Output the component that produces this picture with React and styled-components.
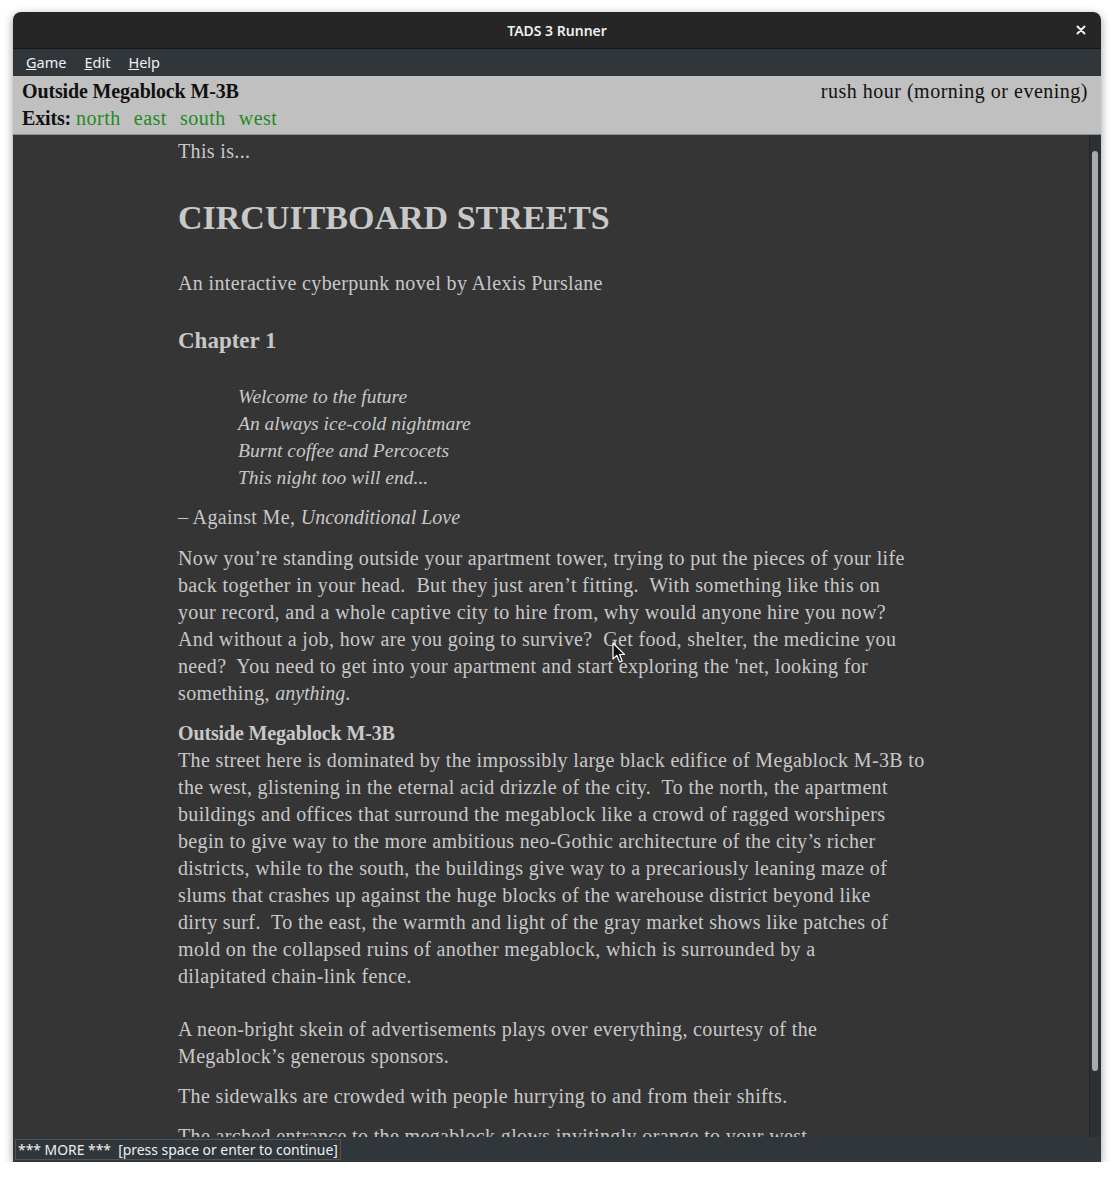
import styled, { createGlobalStyle } from 'styled-components'

const GlobalStyle = createGlobalStyle`
  body {
    margin: 0;
    background: #ffffff;
  }
`

const Window = styled.div`
  position: relative;
  margin: 12px 0 0 13px;
  width: 1088px;
  height: 1150px;
  display: flex;
  flex-direction: column;
  border-radius: 8px 8px 0 0;
  overflow: hidden;
  box-shadow: 0 3px 10px rgba(0, 0, 0, 0.4);
`

const TitleBar = styled.div`
  height: 36px;
  flex-shrink: 0;
  display: grid;
  grid-template-columns: 1fr auto 1fr;
  align-items: center;
  background: #262626;
  border-bottom: 1px solid #161616;
  color: #eeeeee;
  font-family: "Noto Sans", sans-serif;
  font-size: 14px;
  font-weight: 600;
`

const Title = styled.div`
  grid-column: 2;
`

const CloseButton = styled.div`
  justify-self: end;
  margin-right: 15px;
  display: flex;
`

const MenuBar = styled.div`
  height: 27px;
  flex-shrink: 0;
  display: flex;
  align-items: center;
  gap: 18px;
  padding: 0 0 1px 13px;
  box-sizing: border-box;
  background: #31363b;
  color: #eff0f1;
  font-family: "Noto Sans", sans-serif;
  font-size: 14.5px;
`

const MenuItem = styled.span`
  &::first-letter {
    text-decoration: underline;
  }
`

const StatusBar = styled.div`
  height: 56px;
  flex-shrink: 0;
  padding: 2px 13px 0 9px;
  background: #c0c0c0;
  border-bottom: 1px solid #8e8e8e;
  color: #111111;
  font-family: "Liberation Serif", serif;
  font-size: 20px;
  line-height: 27px;
  letter-spacing: 0.5px;
`

const StatusRow = styled.div`
  display: flex;
  justify-content: space-between;
  white-space: pre;
`

const Bold = styled.span`
  font-weight: 700;
  letter-spacing: -0.15px;
`

const Exit = styled.span`
  color: #228b22;
  margin-left: ${p => (p.$first ? 5 : 13)}px;
`

const Main = styled.div`
  flex: 1;
  min-height: 0;
  display: flex;
`

const Content = styled.div`
  flex: 1;
  overflow: hidden;
  padding: 3px 0 0 165px;
  background: #353535;
  color: #c8c8c8;
  font-family: "Liberation Serif", serif;
  font-size: 20px;
  line-height: 27px;
  letter-spacing: 0.35px;
`

const Para = styled.p`
  margin: 0 0 ${p => p.$after || 13}px;
  white-space: pre;
`

const Heading = styled.h1`
  margin: 33px 0 32px;
  font-size: 34px;
  line-height: 40px;
  font-weight: 700;
  letter-spacing: 0;
`

const Chapter = styled.h2`
  margin: 28px 0 26px;
  font-size: 23px;
  line-height: 32px;
  font-weight: 700;
  letter-spacing: 0;
`

const Poem = styled.div`
  margin: 0 0 13px 60px;
  font-style: italic;
  font-size: 19.5px;
  letter-spacing: 0;
  white-space: pre;
`

const Emph = styled.i`
  letter-spacing: 0;
`

const Gap = styled.div`
  height: ${p => p.$h}px;
`

const Scrollbar = styled.div`
  width: 12px;
  flex-shrink: 0;
  background: #2b3034;
  border-left: 1px solid #22262a;
  padding: 16px 0 0 2px;
  box-sizing: border-box;
`

const Thumb = styled.div`
  width: 6px;
  height: 920px;
  border-radius: 3px;
  background: #a9abab;
`

const MoreBar = styled.div`
  height: 25px;
  flex-shrink: 0;
  background: #31363b;
  padding: 2px 0 0 2px;
  box-sizing: border-box;
`

const MoreBox = styled.span`
  display: inline-block;
  padding: 0 2px;
  border: 1px solid #4d545a;
  color: #eff0f1;
  font-family: "Noto Sans", sans-serif;
  font-size: 13.9px;
  line-height: 19px;
  white-space: pre;
`

const Pointer = styled.svg`
  position: absolute;
  left: 599px;
  top: 630px;
`

const App = () => {
  return (
    <>
      <GlobalStyle />
      <Window>
        <TitleBar>
          <Title>TADS 3 Runner</Title>
          <CloseButton>
            <svg width="10" height="10" viewBox="0 0 10 10">
              <path d="M1.5 1.5 L8.5 8.5 M8.5 1.5 L1.5 8.5" stroke="#f2f2f2" strokeWidth="2" strokeLinecap="round" />
            </svg>
          </CloseButton>
        </TitleBar>
        <MenuBar>
          <MenuItem>Game</MenuItem>
          <MenuItem>Edit</MenuItem>
          <MenuItem>Help</MenuItem>
        </MenuBar>
        <StatusBar>
          <StatusRow>
            <Bold>Outside Megablock M-3B</Bold>
            <span>rush hour (morning or evening)</span>
          </StatusRow>
          <StatusRow>
            <span>
              <Bold>Exits:</Bold>
              <Exit $first>north</Exit>
              <Exit>east</Exit>
              <Exit>south</Exit>
              <Exit>west</Exit>
            </span>
          </StatusRow>
        </StatusBar>
        <Main>
          <Content>
            <Para>This is...</Para>
            <Heading>CIRCUITBOARD STREETS</Heading>
            <Para>An interactive cyberpunk novel by Alexis Purslane</Para>
            <Chapter>Chapter 1</Chapter>
            <Poem>
              {'Welcome to the future'}<br />
              {'An always ice-cold nightmare'}<br />
              {'Burnt coffee and Percocets'}<br />
              {'This night too will end...'}
            </Poem>
            <Para $after={14}>– Against Me, <Emph>Unconditional Love</Emph></Para>
            <Para>
              {'Now you’re standing outside your apartment tower, trying to put the pieces of your life'}<br />
              {'back together in your head.  But they just aren’t fitting.  With something like this on'}<br />
              {'your record, and a whole captive city to hire from, why would anyone hire you now?'}<br />
              {'And without a job, how are you going to survive?  Get food, shelter, the medicine you'}<br />
              {'need?  You need to get into your apartment and start exploring the \'net, looking for'}<br />
              {'something, '}<Emph>anything</Emph>.
            </Para>
            <Para>
              <Bold>Outside Megablock M-3B</Bold><br />
              {'The street here is dominated by the impossibly large black edifice of Megablock M-3B to'}<br />
              {'the west, glistening in the eternal acid drizzle of the city.  To the north, the apartment'}<br />
              {'buildings and offices that surround the megablock like a crowd of ragged worshipers'}<br />
              {'begin to give way to the more ambitious neo-Gothic architecture of the city’s richer'}<br />
              {'districts, while to the south, the buildings give way to a precariously leaning maze of'}<br />
              {'slums that crashes up against the huge blocks of the warehouse district beyond like'}<br />
              {'dirty surf.  To the east, the warmth and light of the gray market shows like patches of'}<br />
              {'mold on the collapsed ruins of another megablock, which is surrounded by a'}<br />
              {'dilapitated chain-link fence.'}
            </Para>
            <Gap $h={13} />
            <Para>
              {'A neon-bright skein of advertisements plays over everything, courtesy of the'}<br />
              {'Megablock’s generous sponsors.'}
            </Para>
            <Para>The sidewalks are crowded with people hurrying to and from their shifts.</Para>
            <Para>The arched entrance to the megablock glows invitingly orange to your west.</Para>
          </Content>
          <Scrollbar>
            <Thumb />
          </Scrollbar>
        </Main>
        <MoreBar>
          <MoreBox>{'*** MORE ***  [press space or enter to continue]'}</MoreBox>
        </MoreBar>
        <Pointer width="14" height="22" viewBox="0 0 14 22">
          <path d="M1 1 L1 17 L4.8 13.4 L7.6 20 L10.2 18.9 L7.5 12.5 L12.5 12.5 Z" fill="#111" stroke="#fff" strokeWidth="1.2" strokeLinejoin="round" />
        </Pointer>
      </Window>
    </>
  )
}

export default App
